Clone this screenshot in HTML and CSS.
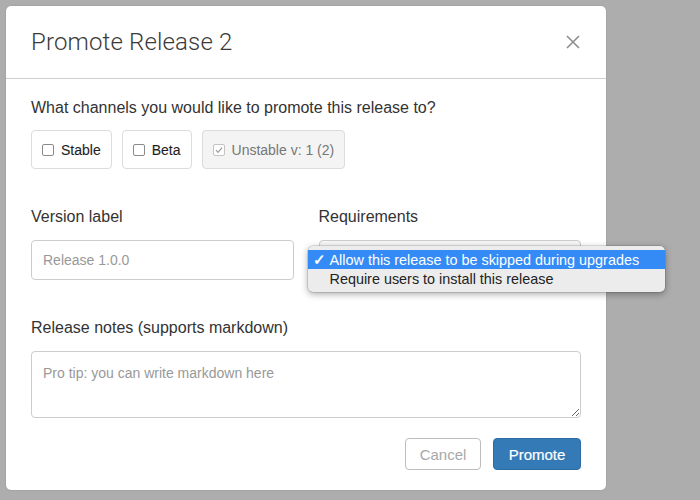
FILE: index.html
```html
<!DOCTYPE html>
<html>
<head>
<meta charset="utf-8">
<link rel="stylesheet" href="styles.css">
</head>
<body>
<div class="modal">
  <div class="header">
    <h1 class="title">Promote Release 2</h1>
    <svg class="close" width="14" height="14" viewBox="0 0 14 14"><path d="M1 1L13 13M13 1L1 13" stroke="#8e8e8e" stroke-width="1.6" fill="none"/></svg>
  </div>
  <div class="body">
    <p class="question">What channels you would like to promote this release to?</p>
    <div class="channels">
      <label class="channel"><span class="cb"></span>Stable</label>
      <label class="channel"><span class="cb"></span>Beta</label>
      <label class="channel disabled"><span class="cb checked"><svg width="8" height="8" viewBox="0 0 8 8"><path d="M1 4.2L3.1 6.3L7 1.6" stroke="#9a9a9a" stroke-width="1.2" fill="none"/></svg></span>Unstable v: 1 (2)</label>
    </div>
    <div class="fields">
      <div class="field">
        <div class="label">Version label</div>
        <input class="input" type="text" placeholder="Release 1.0.0">
      </div>
      <div class="field">
        <div class="label">Requirements</div>
        <div class="select">
          <div class="menu">
            <div class="item selected"><span class="check">✓</span>Allow this release to be skipped during upgrades</div>
            <div class="item"><span class="check"></span>Require users to install this release</div>
          </div>
        </div>
      </div>
    </div>
    <div class="label notes-label">Release notes (supports markdown)</div>
    <textarea class="notes" placeholder="Pro tip: you can write markdown here"></textarea>
    <div class="actions">
      <button class="btn cancel">Cancel</button>
      <button class="btn primary">Promote</button>
    </div>
  </div>
</div>
</body>
</html>
```
FILE: styles.css
```css
html, body {
  margin: 0;
  padding: 0;
}
body {
  width: 700px;
  height: 500px;
  background: #adadad;
  font-family: "Liberation Sans", Arial, sans-serif;
  color: #333;
  overflow: hidden;
}
.modal {
  margin: 6px 0 0 6px;
  width: 600px;
  height: 484px;
  background: #fff;
  border-radius: 5px;
  box-shadow: 0 0 2px rgba(0,0,0,0.15);
}
.header {
  height: 72px;
  border-bottom: 1px solid #cfcfcf;
  display: flex;
  align-items: center;
  justify-content: space-between;
  padding: 0 25px;
}
.title {
  margin: 0;
  font-family: Roboto, "Liberation Sans", sans-serif;
  font-weight: 300;
  font-size: 24px;
  color: #3a3a3a;
  letter-spacing: 0.15px;
}
.close {
  margin-right: 1px;
}
.body {
  padding: 18px 25px 0 25px;
}
.question {
  margin: 0;
  font-size: 16px;
  line-height: 22px;
}
.channels {
  display: flex;
  gap: 10px;
  margin-top: 11px;
}
.channel {
  display: flex;
  align-items: center;
  gap: 7px;
  height: 37px;
  padding: 0 10px 0 10px;
  border: 1px solid #dcdcdc;
  border-radius: 4px;
  font-size: 14px;
  color: #1e1e1e;
  -webkit-text-stroke: 0.1px #1e1e1e;
}
.channel.disabled {
  background: #f4f4f4;
  color: #777;
  -webkit-text-stroke: 0;
}
.cb {
  width: 10px;
  height: 10px;
  border: 1px solid #8a8a8a;
  border-radius: 2px;
  background: #fff;
  display: flex;
  align-items: center;
  justify-content: center;
}
.cb.checked {
  border-color: #c4c4c4;
}
.fields {
  display: grid;
  grid-template-columns: 1fr 1fr;
  gap: 25px;
  margin-top: 37px;
}
.label {
  font-size: 16px;
  line-height: 22px;
}
.input {
  display: block;
  box-sizing: border-box;
  width: 100%;
  height: 40px;
  margin-top: 12px;
  border: 1px solid #cccccc;
  border-radius: 4px;
  padding: 0 11px;
  font-family: "Liberation Sans", Arial, sans-serif;
  font-size: 14px;
  outline: none;
}
.input::placeholder, .notes::placeholder {
  color: #999;
}
.select {
  position: relative;
  box-sizing: border-box;
  height: 40px;
  margin-top: 12px;
  border: 1px solid #cccccc;
  border-radius: 4px;
  background: #f7f7f7;
}
.menu {
  position: absolute;
  left: -12px;
  top: 5px;
  width: 357px;
  box-sizing: border-box;
  padding: 4px 0;
  background: #ececec;
  border-radius: 5px;
  box-shadow: 0 2px 7px rgba(0,0,0,0.35), 0 0 0 0.5px rgba(0,0,0,0.2);
}
.item {
  display: flex;
  align-items: center;
  height: 19px;
  font-size: 14.4px;
  color: #222;
}
.item.selected {
  background: #348bf6;
  color: #fff;
}
.check {
  width: 22px;
  padding-left: 5px;
  box-sizing: border-box;
  font-size: 15px;
  font-weight: bold;
}
.notes-label {
  margin-top: 37px;
}
.notes {
  display: block;
  box-sizing: border-box;
  width: 100%;
  height: 67px;
  margin-top: 12px;
  border: 1px solid #cccccc;
  border-radius: 4px;
  padding: 13px 11px 12px;
  font-family: "Liberation Sans", Arial, sans-serif;
  font-size: 14px;
  outline: none;
}
.actions {
  display: flex;
  justify-content: flex-end;
  gap: 12px;
  margin-top: 20px;
}
.btn {
  height: 32px;
  border-radius: 4px;
  font-family: "Liberation Sans", Arial, sans-serif;
  font-size: 15px;
  padding: 0;
}
.cancel {
  width: 76px;
  background: #fff;
  border: 1px solid #bdbdbd;
  color: #a8a8a8;
}
.primary {
  width: 88px;
  background: #337ab7;
  border: 1px solid #2e6da4;
  color: #fff;
  -webkit-text-stroke: 0.2px #fff;
}
```
